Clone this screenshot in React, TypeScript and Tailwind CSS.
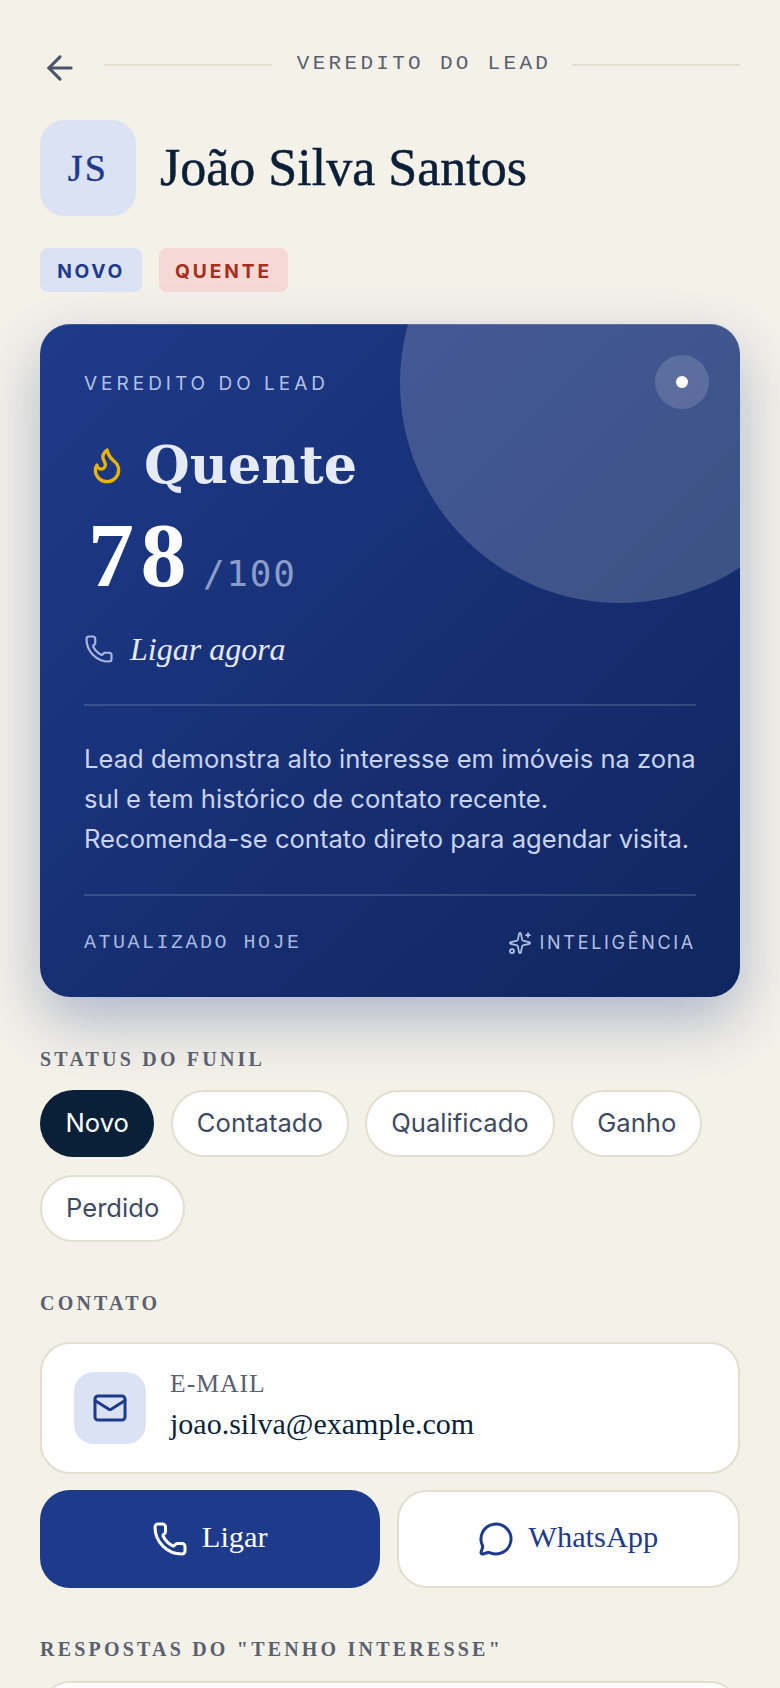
import { ArrowLeft, Flame, Mail, MessageCircle, Phone, Sparkles } from "lucide-react";

const SERIF = "font-['Liberation_Serif',serif]";
const statuses = ["Contatado", "Qualificado", "Ganho", "Perdido"];

function SectionLabel({ children, className = "" }: { children: React.ReactNode; className?: string }) {
  return (
    <h2 className={`font-['Liberation_Serif',serif] text-[20px] leading-[24px] font-bold tracking-[0.16em] text-[#59606e] ${className}`}>
      {children}
    </h2>
  );
}

export default function App() {
  return (
    <div className="h-[1688px] overflow-hidden bg-[#f4f1e9] px-10 pt-[45px] font-['Inter',sans-serif]">
      {/* top bar */}
      <header className="flex h-[40px] items-center">
        <ArrowLeft className="ml-[1px] mt-[6px] h-[38px] w-[38px] shrink-0 text-[#4a5568]" strokeWidth={2} />
        <div className="ml-[25px] h-[2px] flex-1 bg-[#e3dfd0]" />
        <span className="-mt-[3px] ml-[25px] mr-[21px] font-['Liberation_Mono',monospace] text-[21px] leading-[24px] tracking-[0.157em] text-[#59606e]">
          VEREDITO DO LEAD
        </span>
        <div className="h-[2px] flex-1 bg-[#e3dfd0]" />
      </header>

      {/* lead */}
      <div className="mt-[35px] flex items-center gap-6">
        <div className={`flex h-[96px] w-[96px] items-center justify-center rounded-[24px] bg-[#dbe2f4] text-[38px] tracking-[0.06em] text-[#1e3a8a] [-webkit-text-stroke:0.4px_#1e3a8a] ${SERIF}`}>
          JS
        </div>
        <h1 className={`${SERIF} text-[52px] leading-[60px] text-[#0a1f38] [-webkit-text-stroke:0.5px_#0a1f38]`}>João Silva Santos</h1>
      </div>

      <div className="mt-[32px] flex gap-[17px]">
        <span className="flex h-[44px] w-[102px] items-center justify-center rounded-[8px] bg-[#dbe2f4] pt-[3px] text-[19.2px] font-bold tracking-[0.14em] text-[#1e3a8a]">
          NOVO
        </span>
        <span className="flex h-[44px] w-[129px] items-center justify-center rounded-[8px] bg-[#f4d9d4] pt-[3px] text-[19.2px] font-bold tracking-[0.15em] text-[#a82d1d]">
          QUENTE
        </span>
      </div>

      {/* verdict card */}
      <section className="relative mt-[32px] h-[673px] overflow-hidden rounded-[30px] bg-linear-to-br from-[#1e3a8a] to-[#10265f] px-[44px] pt-[48px] shadow-[0_24px_60px_rgba(30,58,138,0.32),inset_0_1px_0_rgba(255,255,255,0.15)]">
        <div className="absolute -right-[100px] -top-[161px] h-[440px] w-[440px] rounded-full bg-white/18" />
        <div className="absolute right-[31px] top-[31px] flex h-[54px] w-[54px] items-center justify-center rounded-full bg-white/15">
          <div className="h-[12px] w-[12px] rounded-full bg-white" />
        </div>

        <div className="relative">
          <p className="text-[19px] leading-[24px] tracking-[0.21em] text-[#b4c0e4]">VEREDITO DO LEAD</p>

          <div className="mt-[37px] flex h-[64px] items-center">
            <Flame className="ml-[3px] h-[40px] w-[40px] text-[#eab308]" strokeWidth={2} />
            <span className="ml-[17px] font-['DejaVu_Serif',serif] text-[52.5px] leading-[64px] font-bold text-[#e6eaf5]">Quente</span>
          </div>

          <div className="mt-[16px] flex h-[84px] items-baseline">
            <span className={`${SERIF} ml-[4px] text-[92px] leading-[84px] font-bold tracking-[0.07em] text-white`}>78</span>
            <span className="ml-[10px] font-['DejaVu_Sans_Mono',monospace] text-[36px] tracking-[0.05em] text-[#8d9dcb]">/100</span>
          </div>

          <div className="mt-[32px] flex h-[40px] items-center">
            <Phone className="h-[30px] w-[30px] text-[#a9b7df]" strokeWidth={1.75} />
            <span className={`${SERIF} ml-[16px] text-[32px] italic text-[#e6eaf5]`}>Ligar agora</span>
          </div>

          <div className="mt-[35px] h-[2px] bg-white/15" />

          <p className="mt-[33px] text-[25.6px] leading-[40px] text-[#c9d3ee]">
            Lead demonstra alto interesse em imóveis na zona
            <br />
            sul e tem histórico de contato recente.
            <br />
            Recomenda-se contato direto para agendar visita.
          </p>

          <div className="mt-[35px] h-[2px] bg-white/15" />

          <div className="mt-[35px] flex items-center justify-between">
            <span className="font-['Liberation_Mono',monospace] text-[20px] leading-[24px] tracking-[0.125em] text-[#a9b7df]">
              ATUALIZADO HOJE
            </span>
            <span className="flex items-center gap-[8px] text-[18px] leading-[24px] tracking-[0.15em] text-[#b4c0e4]">
              <Sparkles className="h-[24px] w-[24px]" strokeWidth={1.75} />
              INTELIGÊNCIA
            </span>
          </div>
        </div>
      </section>

      {/* funnel */}
      <div className="relative mt-[50px]">
        <SectionLabel>STATUS DO FUNIL</SectionLabel>
        <div className="mt-[19px] flex flex-wrap gap-x-[16.5px] gap-y-[18px]">
          <span className="flex h-[67px] items-center rounded-full bg-[#0a1f38] px-[25.5px] text-[25.6px] text-white">Novo</span>
          {statuses.map((s) => (
            <span
              key={s}
              className="flex h-[67px] items-center rounded-full border-2 border-[#e3dfd0] bg-white px-[24px] text-[25.6px] text-[#3d4a5f]"
            >
              {s}
            </span>
          ))}
        </div>
      </div>

      {/* contact */}
      <SectionLabel className="mt-[49px]">CONTATO</SectionLabel>
      <div className="mt-[27px] flex h-[132px] items-center rounded-[30px] border-2 border-[#e3dfd0] bg-white px-[32px]">
        <div className="flex h-[72px] w-[72px] items-center justify-center rounded-[20px] bg-[#dbe2f4]">
          <Mail className="h-[36px] w-[36px] text-[#1e3a8a]" strokeWidth={2} />
        </div>
        <div className="mb-[3px] ml-[24px]">
          <p className={`${SERIF} text-[25.6px] leading-[28px] tracking-[0.04em] text-[#59606e]`}>E-MAIL</p>
          <p className={`${SERIF} mt-[7px] text-[30px] leading-[38px] text-[#0a1f38]`}>joao.silva@example.com</p>
        </div>
      </div>

      <div className={`${SERIF} mt-[16px] flex gap-[17px] text-[30.4px]`}>
        <button className="flex h-[98px] flex-1 items-center justify-center gap-[14px] rounded-[30px] bg-[#1e3a8a] text-white">
          <Phone className="h-[36px] w-[36px]" strokeWidth={2} />
          <span className="pb-[2px]">Ligar</span>
        </button>
        <button className="flex h-[98px] flex-1 items-center justify-center gap-[14px] rounded-[30px] border-2 border-[#e3dfd0] bg-white text-[#1e3a8a]">
          <MessageCircle className="h-[36px] w-[36px]" strokeWidth={2} />
          <span className="pb-[2px]">WhatsApp</span>
        </button>
      </div>

      <SectionLabel className="mt-[49px]">RESPOSTAS DO "TENHO INTERESSE"</SectionLabel>
      <div className="mt-[20px] h-[100px] rounded-[30px] border-2 border-[#e3dfd0] bg-white" />
    </div>
  );
}
